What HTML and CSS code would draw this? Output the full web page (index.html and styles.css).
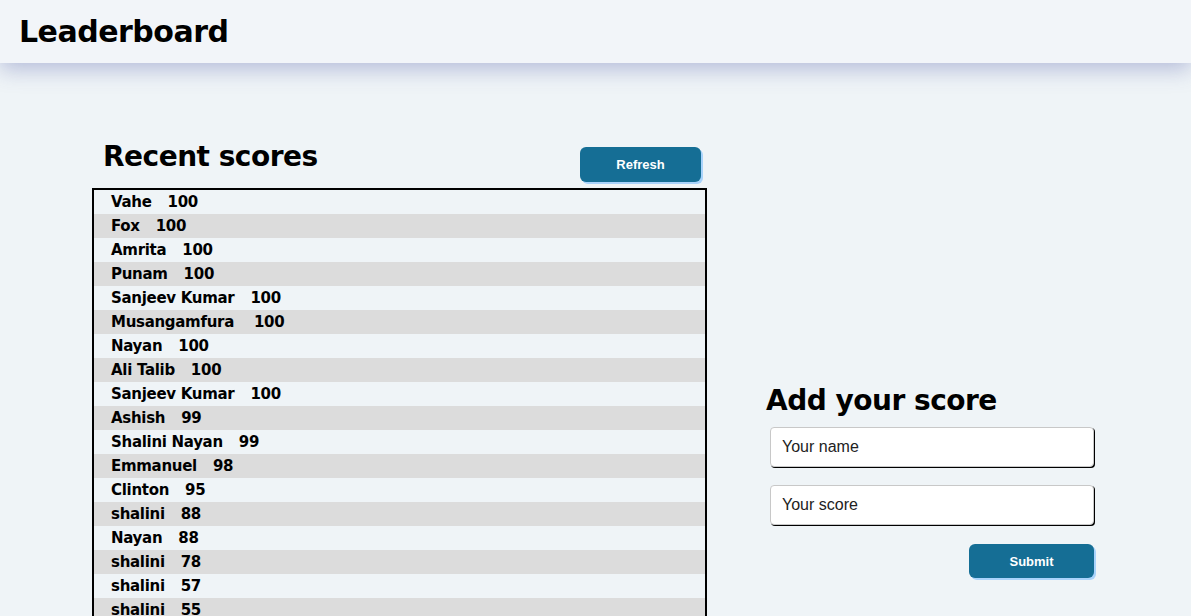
FILE: index.html
```html
<!DOCTYPE html>
<html lang="en">
<head>
<meta charset="utf-8">
<title>Leaderboard</title>
<link rel="stylesheet" href="styles.css">
</head>
<body>
<header class="topbar">
  <h1 class="brand">Leaderboard</h1>
</header>
<main class="layout">
  <section class="recent">
    <div class="recent-head">
      <h2 class="title">Recent scores</h2>
      <button class="btn btn-refresh" type="button">Refresh</button>
    </div>
    <ul class="scores">
      <li class="row"><span class="name">Vahe</span><span class="score">100</span></li>
      <li class="row"><span class="name">Fox</span><span class="score">100</span></li>
      <li class="row"><span class="name">Amrita</span><span class="score">100</span></li>
      <li class="row"><span class="name">Punam</span><span class="score">100</span></li>
      <li class="row"><span class="name">Sanjeev Kumar</span><span class="score">100</span></li>
      <li class="row"><span class="name">Musangamfura</span><span class="score wide">100</span></li>
      <li class="row"><span class="name">Nayan</span><span class="score">100</span></li>
      <li class="row"><span class="name">Ali Talib</span><span class="score">100</span></li>
      <li class="row"><span class="name">Sanjeev Kumar</span><span class="score">100</span></li>
      <li class="row"><span class="name">Ashish</span><span class="score">99</span></li>
      <li class="row"><span class="name">Shalini Nayan</span><span class="score">99</span></li>
      <li class="row"><span class="name">Emmanuel</span><span class="score">98</span></li>
      <li class="row"><span class="name">Clinton</span><span class="score">95</span></li>
      <li class="row"><span class="name">shalini</span><span class="score">88</span></li>
      <li class="row"><span class="name">Nayan</span><span class="score">88</span></li>
      <li class="row"><span class="name">shalini</span><span class="score">78</span></li>
      <li class="row"><span class="name">shalini</span><span class="score">57</span></li>
      <li class="row"><span class="name">shalini</span><span class="score">55</span></li>
    </ul>
  </section>
  <section class="add">
    <h2 class="title title-add">Add your score</h2>
    <form class="add-form">
      <input class="field" type="text" placeholder="Your name">
      <input class="field" type="text" placeholder="Your score">
      <button class="btn btn-submit" type="button">Submit</button>
    </form>
  </section>
</main>
</body>
</html>
```
FILE: styles.css
```css
html, body {
  margin: 0;
  padding: 0;
}
body {
  background: #eff4f7;
  font-family: "DejaVu Sans", "Noto Sans", sans-serif;
  color: #000;
  height: 616px;
  overflow: hidden;
}
.topbar {
  height: 63px;
  background: #f2f5f9;
  box-shadow: 0 6px 22px rgba(70, 80, 160, 0.35);
  display: flex;
  align-items: center;
  padding-left: 19px;
  position: relative;
}
.brand {
  margin: 0;
  font-size: 30px;
  font-weight: 700;
  letter-spacing: -0.5px;
}
.layout {
  display: flex;
  align-items: flex-start;
  padding-left: 92px;
  padding-top: 74px;
  gap: 59px;
}
.recent {
  width: 615px;
}
.recent-head {
  display: flex;
  justify-content: space-between;
  align-items: flex-start;
  padding-left: 11px;
  padding-right: 6px;
  height: 46px;
}
.title {
  margin: 0;
  font-size: 28px;
  font-weight: 700;
  letter-spacing: -0.5px;
  line-height: 40px;
}
.btn {
  border: none;
  background: #156e95;
  color: #fff;
  font-family: "Liberation Sans", Arial, sans-serif;
  font-weight: 700;
  font-size: 13px;
  border-radius: 6px;
  box-shadow: 2px 2px 0 #a9d3fb;
  cursor: pointer;
}
.btn-refresh {
  width: 121px;
  height: 35px;
  margin-top: 10px;
}
.scores {
  list-style: none;
  margin: 5px 0 0;
  padding: 0;
  border: 2px solid #000;
}
.row {
  display: flex;
  gap: 16px;
  height: 24px;
  line-height: 24px;
  padding-left: 17px;
  font-size: 15px;
  font-weight: 700;
  letter-spacing: -0.3px;
}
.row:nth-child(even) {
  background: #dcdcdc;
}
.score.wide {
  margin-left: 4px;
}
.add {
  width: 328px;
  margin-top: 244px;
}
.add-form {
  display: flex;
  flex-direction: column;
  align-items: flex-end;
  padding-top: 6px;
}
.field {
  box-sizing: border-box;
  width: 324px;
  height: 40px;
  margin-bottom: 18px;
  border: 1px solid #c8c8c8;
  border-radius: 4px;
  box-shadow: 1px 1px 0 #000;
  background: #fff;
  padding: 0 11px;
  font-family: "Liberation Sans", Arial, sans-serif;
  font-size: 16px;
  color: #222;
}
.field::placeholder {
  color: #222;
}
.btn-submit {
  width: 125px;
  height: 34px;
  margin-top: 1px;
}
```
